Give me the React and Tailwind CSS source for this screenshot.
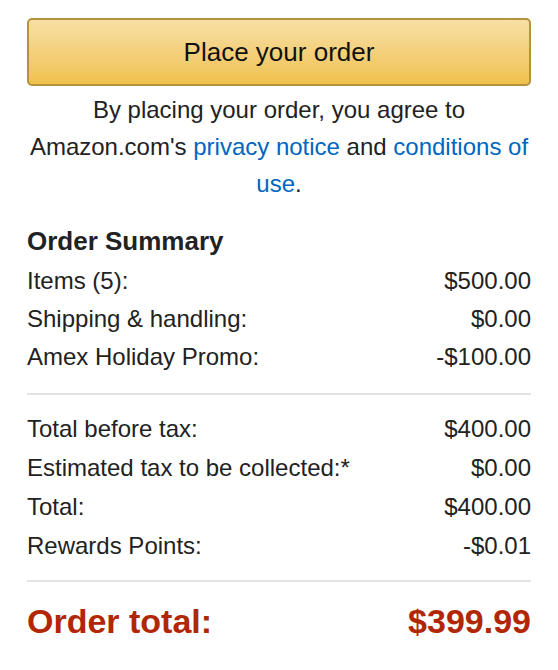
import React from "react";

const summaryRows = [
  { label: "Items (5):", value: "$500.00" },
  { label: "Shipping & handling:", value: "$0.00" },
  { label: "Amex Holiday Promo:", value: "-$100.00" },
];

const totalRows = [
  { label: "Total before tax:", value: "$400.00" },
  { label: "Estimated tax to be collected:*", value: "$0.00" },
  { label: "Total:", value: "$400.00" },
  { label: "Rewards Points:", value: "-$0.01" },
];

const Row = ({ label, value, tall }) => (
  <div className={`flex justify-between ${tall ? "leading-[39px]" : "leading-[38px]"}`}>
    <span>{label}</span>
    <span>{value}</span>
  </div>
);

const App = () => {
  return (
    <div
      className="w-[558px] h-[670px] bg-white px-[27px] pt-[18px] text-[24px] text-[#111]"
      style={{ fontFamily: '"Liberation Sans", Arial, sans-serif' }}
    >
      <button className="w-full h-[68px] rounded-[5px] border-2 border-[#b5923e] bg-gradient-to-b from-[#f7dfa5] to-[#f0c14b] text-[26px] text-[#111]">
        Place your order
      </button>

      <p className="mt-[5px] text-center leading-[37px] text-[#222]">
        By placing your order, you agree to
        <br />
        Amazon.com's <span className="text-[#0066c0]">privacy notice</span> and{" "}
        <span className="text-[#0066c0]">conditions of use</span>.
      </p>

      <div className="mt-[19px] text-[#222]">
        <h2 className="text-[26px] font-bold leading-[40px]">Order Summary</h2>
        <div className="mt-[1px]">
          {summaryRows.map((r) => (
            <Row key={r.label} {...r} />
          ))}
        </div>

        <div className="mt-[17px] h-[2px] bg-[#e3e3e3]" />

        <div className="mt-[14px]">
          {totalRows.map((r) => (
            <Row key={r.label} {...r} tall />
          ))}
        </div>

        <div className="mt-[15px] h-[2px] bg-[#e3e3e3]" />

        <div className="mt-[17px] flex justify-between text-[34px] font-bold leading-[44px] text-[#b12704]">
          <span>Order total:</span>
          <span>$399.99</span>
        </div>
      </div>
    </div>
  );
};

export default App;
